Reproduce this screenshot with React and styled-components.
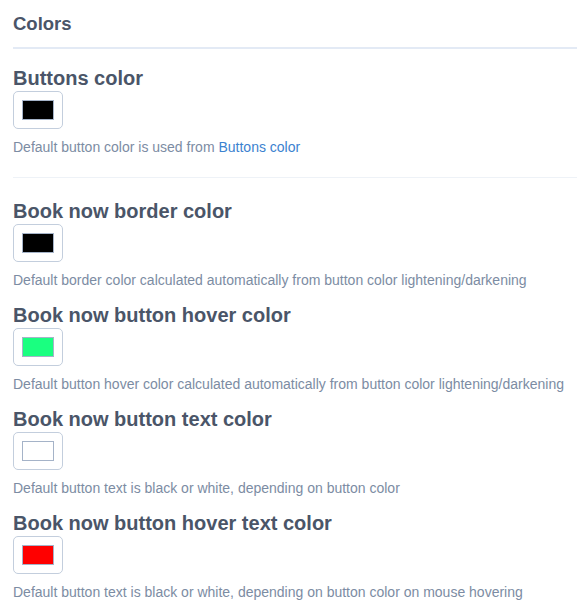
import styled, {createGlobalStyle} from "styled-components";

const GlobalStyle = createGlobalStyle`
    body {
        margin: 0;
        background: #ffffff;
        font-family: "Liberation Sans", Arial, sans-serif;
    }
`;

const fields = [
    {
        title: "Book now border color",
        color: "#000000",
        hint: "Default border color calculated automatically from button color lightening/darkening",
    },
    {
        title: "Book now button hover color",
        color: "#1aff80",
        hint: "Default button hover color calculated automatically from button color lightening/darkening",
    },
    {
        title: "Book now button text color",
        color: "#ffffff",
        hint: "Default button text is black or white, depending on button color",
    },
    {
        title: "Book now button hover text color",
        color: "#ff0000",
        hint: "Default button text is black or white, depending on button color on mouse hovering",
    },
];

const App = () => {
    return (
        <Page>
            <GlobalStyle/>
            <SectionTitle>Colors</SectionTitle>
            <Divider/>
            <Group $top={17}>
                <Field>
                    <FieldTitle>Buttons color</FieldTitle>
                    <Swatch type="button">
                        <SwatchFill $color="#000000"/>
                    </Swatch>
                    <Hint>
                        Default button color is used from <HintLink href="#">Buttons color</HintLink>
                    </Hint>
                </Field>
            </Group>
            <Separator/>
            <Group $top={21}>
                {fields.map((f) => (
                    <Field key={f.title}>
                        <FieldTitle>{f.title}</FieldTitle>
                        <Swatch type="button">
                            <SwatchFill $color={f.color}/>
                        </Swatch>
                        <Hint>{f.hint}</Hint>
                    </Field>
                ))}
            </Group>
        </Page>
    );
};
export default App;

const Page = styled.div`
    padding: 12px 0 0 13px;
    width: 564px;
`;

const SectionTitle = styled.h2`
    margin: 0;
    font-size: 18.5px;
    line-height: 24px;
    font-weight: 700;
    color: #4a5568;
`;

const Divider = styled.div`
    margin-top: 11px;
    height: 2px;
    background: #e3eaf5;
`;

const Separator = styled.div`
    margin-top: 22px;
    height: 1px;
    background: #eef2f7;
`;

const Group = styled.div`
    display: flex;
    flex-direction: column;
    gap: 15px;
    margin-top: ${(p) => p.$top}px;
`;

const Field = styled.div`
    display: flex;
    flex-direction: column;
    align-items: flex-start;
`;

const FieldTitle = styled.h3`
    margin: 0;
    font-size: 20px;
    line-height: 24px;
    font-weight: 700;
    color: #4a5568;
`;

const Swatch = styled.button`
    margin-top: 1px;
    box-sizing: border-box;
    width: 50px;
    height: 38px;
    padding: 8px;
    border: 1px solid #c3cedd;
    border-radius: 5px;
    background: #ffffff;
    cursor: pointer;
    display: flex;
`;

const SwatchFill = styled.span`
    box-sizing: border-box;
    width: 32px;
    height: 20px;
    border: 1px solid #a5b3c8;
    background: ${(p) => p.$color};
`;

const Hint = styled.p`
    margin: 10px 0 0;
    font-size: 14px;
    line-height: 16px;
    color: #7c8ca3;
`;

const HintLink = styled.a`
    color: #3b82d0;
    text-decoration: none;
`;
